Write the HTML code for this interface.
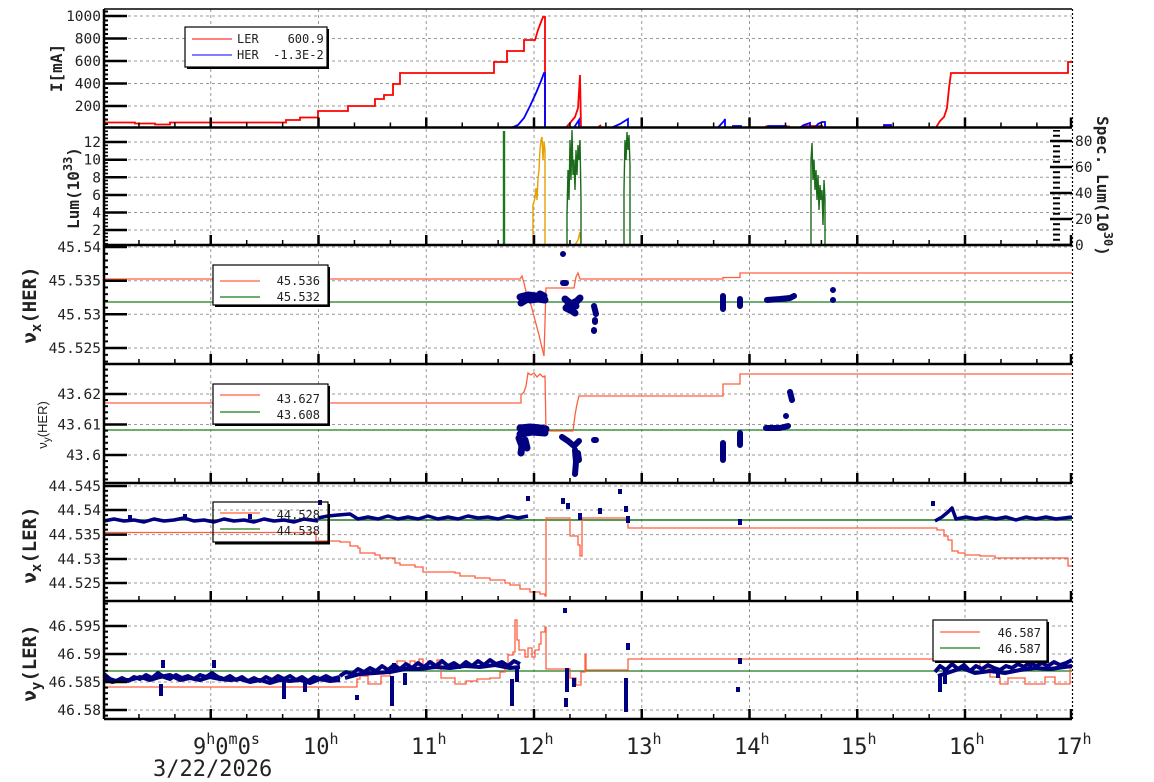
<!DOCTYPE html>
<html><head><meta charset="utf-8"><style>
html,body{margin:0;padding:0;background:#fff;}
svg{display:block;}
text{font-family:"DejaVu Sans Mono","Liberation Mono",monospace;fill:#222;}
.yl{font-size:14.5px;text-anchor:end;}
.lg{font-size:12px;}
.xl{font-size:22px;}
.nv{fill:none;stroke:#000080;stroke-linejoin:round;}
</style></head><body>
<svg width="1154" height="782" viewBox="0 0 1154 782" xmlns="http://www.w3.org/2000/svg">
<defs>
<pattern id="t1" patternUnits="userSpaceOnUse" x="0" y="15" width="20" height="4.5"><rect x="0" y="0" width="8" height="2" fill="#000"/></pattern>
<pattern id="t2" patternUnits="userSpaceOnUse" x="0" y="141" width="20" height="3.52"><rect x="0" y="0" width="8" height="1.6" fill="#000"/></pattern>
<pattern id="t3" patternUnits="userSpaceOnUse" x="0" y="246" width="20" height="6.74"><rect x="0" y="0" width="8" height="2" fill="#000"/></pattern>
<pattern id="t4" patternUnits="userSpaceOnUse" x="0" y="393" width="20" height="6.1"><rect x="0" y="0" width="8" height="2" fill="#000"/></pattern>
<pattern id="t5" patternUnits="userSpaceOnUse" x="0" y="485" width="20" height="4.85"><rect x="0" y="0" width="8" height="2" fill="#000"/></pattern>
<pattern id="t6" patternUnits="userSpaceOnUse" x="0" y="625" width="20" height="5.6"><rect x="0" y="0" width="8" height="2" fill="#000"/></pattern>
<pattern id="tr" patternUnits="userSpaceOnUse" x="0" y="244" width="20" height="5.2"><rect x="13" y="0" width="7" height="2" fill="#000"/></pattern>
<pattern id="bx" patternUnits="userSpaceOnUse" x="102.3" y="0" width="35.917" height="800"><rect x="0" y="0" width="1.5" height="800" fill="#000"/></pattern>
</defs>
<!-- grid -->
<path d="M210.75 9V719M318.5 9V719M426.25 9V719M534 9V719M641.75 9V719M749.5 9V719M857.25 9V719M965 9V719
M104 16H1072M104 38.5H1072M104 61H1072M104 83.5H1072M104 106H1072
M104 142H1072M104 159.7H1072M104 177.3H1072M104 195H1072M104 212.5H1072M104 230H1072
M104 247H1072M104 280.7H1072M104 314.3H1072M104 348H1072
M104 394H1072M104 424.5H1072M104 455H1072
M104 486H1072M104 510H1072M104 534.6H1072M104 559H1072M104 583H1072
M104 626H1072M104 654H1072M104 682H1072M104 710H1072" stroke="#999" stroke-width="1" stroke-dasharray="3,3" fill="none"/>

<!-- DATA panel1 -->
<path d="M104 122.5H135V123.5H155V124.5H170V122.5H286V120H300V117.5H318V111H348V106H375V99H384V95H393V84H400V73H494V62H507V51H524V40H535L538 30L541 22L543 17H545V127.5H566L570 123L575 117L578 108L580 75L581 127.5H936L940 121L944 117L947 108L949 88L951 73H1068V62H1072M598 127.5L601 125M765 126.5H790M803 126H823M884 126H891" stroke="#f00" stroke-width="1.8" fill="none"/>
<path d="M104 127.5H512L518 125L524 118L530 106L536 93L541 81L544 73H545V127.5H574L579 120V127.5H612L620 124L628 119V127.5H718L724 121L725 119V127.5H733V126H741V127.5H768V126H786V127.5H800L804 125L810 123V127.5H815L818 124L822 122H825V127.5H884V125H891V127.5H1072" stroke="#00f" stroke-width="1.8" fill="none"/>
<!-- panel2 -->
<path d="M504 245V131" stroke="#1a7a1a" stroke-width="2.4"/>
<path d="M533 245V205L535 198L536 188L537 200L538 178L539 170L540 150L541 140L542 137L543 160L544 142L545 150V245H575L578 240L580 232L581 245H628" stroke="#e8a000" stroke-width="1.4" fill="none"/>
<path d="M567 245V215L568 170L569 200L570 140L571 180L572 130L573 175L574 160L575 190L576 150L577 175L578 145L579 160L580 140L581 200V245M624 245V190L625 140L626 160L627 132L628 150L629 135L630 165V245M811 245V160L812 143L813 180L814 160L815 190L816 170L817 200L818 175L819 210L820 185L821 200L822 190L823 225L824 180L825 200V245" stroke="#1a6b1a" stroke-width="1.4" fill="none"/>
<!-- panel3 -->
<path d="M104 302H1072" stroke="#1a7a1a" stroke-width="1.3"/>
<path d="M104 279H520L522 276L524 283L527 296L531 305L535 320L539 335L542 348L544 356L546 288H574L576 277L578 273L580 279H723V277.5H740V273H1072" stroke="#ff5f3f" stroke-width="1.3" fill="none"/>
<g class="nv" stroke-linecap="round">
<path d="M520 297L528 295L536 296L544 298M521 303L526 300M530 300L538 299L545 300M540 294L544 296" stroke-width="7"/>
<path d="M565 299L571 304L577 301L580 298M566 308L572 311L575 313M568 305L576 306" stroke-width="7"/>
<path d="M563 254L563 254M563 283L566 283M594 306L596 314M595 320L595 322M594 330L594 331M723 296L723 309M740 299L740 306M767 300L780 299L790 298L794 296M833 290L833 290M833 300L833 300" stroke-width="6"/>
</g>
<!-- panel4 -->
<path d="M104 430H1072" stroke="#1a7a1a" stroke-width="1.3"/>
<path d="M104 403H521V395L524 392L526 386L528 373L531 375L534 373L537 377L540 374L543 377L545 376L546 431H573L575 415L577 404L579 396H723V384H740V374H1072" stroke="#ff5f3f" stroke-width="1.3" fill="none"/>
<g class="nv" stroke-linecap="round">
<path d="M520 428L530 427L540 428L546 429M520 434L532 432L545 433M519 438L522 446L521 453M525 440L527 448" stroke-width="7"/>
<path d="M562 437L568 441L574 446L579 441M575 450L576 462L575 474M578 453L579 460M594 440L596 440M723 443L723 460M740 433L740 445M766 428L780 428L788 426M790 392L792 400M786 416L786 416" stroke-width="6"/>
</g>
<!-- panel5 -->
<path d="M104 520H1072" stroke="#1a7a1a" stroke-width="1.4"/>
<path d="M104 532.5H316V541H340V542H350V546H358V548H360V553H375V555H380V558H395V563H400V565H415V567H423V572H455V573H460V576H475V578H490V580H505V583H510V585H520V589H530V592H540V594H545V596H546V518H570V536H578V545H580V556H582V518H628V528H937V530H944V536H948V540H952V551H958V553H965V555H980V556H995V558H1068V566H1072" stroke="#ff5f3f" stroke-width="1.3" fill="none"/>
<g class="nv" stroke-width="3.5">
<path d="M104 521L114 519L124 521L134 520L144 522L154 519L164 521L174 520L184 518L194 521L204 520L214 522L224 519L234 521L244 520L254 522L264 519L274 521L284 520L294 522L304 519L318 521"/>
<path d="M318 518L328 516L338 515L350 514L358 519L368 517L378 519L388 516L398 519L408 517L418 519L428 516L438 519L448 517L458 519L468 516L478 518L488 517L498 519L508 516L518 518L528 516"/>
<path d="M935 521L942 517L948 512L952 508L956 519L966 517L976 519L986 517L996 519L1006 517L1016 520L1026 517L1036 519L1046 517L1056 519L1072 517"/>
</g>
<g class="nv" stroke-width="4" stroke-linecap="square">
<path d="M130 517V518M185 516V517M250 516V517M320 502V503M528 498V499M563 500V502M568 505V507M580 515V518M600 510V512M620 491V492M626 508V510M628 518V521M740 521V523M933 503V504"/>
</g>
<!-- panel6 -->
<path d="M104 671H1072" stroke="#1a7a1a" stroke-width="1.3"/>
<path d="M104 687H357V679H360V676H368V684H381V676H390V672H393V668H397V661H405V664H410V661H415V668H419V659H423V668H428V661H432V668H437V660H441V678H455V684H466V681H477V679H490V678H500V672H505V664H508V655H513V652H515V620H517V640H519V650H525V657H528V648H532V657H535V650H539V644H541V632H545V627H546V669H570V678H576V685H581V672H585V654H586V670H628V659H937V644H942V652H950V640H953V656H960V662H980V668H990V677H1000V684H1008V678H1025V684H1045V677H1055V684H1070V668H1072" stroke="#ff5f3f" stroke-width="1.3" fill="none"/>
<g class="nv" stroke-width="4">
<path d="M104 674L110 679L116 681L122 678L128 681L134 677L140 679L146 675L152 678L158 673L164 677L170 679L176 675L182 678L188 676L194 679L200 675L206 677L212 673L218 677L224 679L230 676L236 680L242 677L248 681L254 678L260 681L266 677L272 680L278 676L284 679L290 676L296 680L302 677L308 681L314 677L320 679L326 676L332 679L340 677"/>
<path d="M104 678L112 682L120 680L130 680L140 677L150 680L160 677L170 675L180 680L190 678L200 680L210 677L220 679L230 680L240 679L250 682L260 680L270 683L280 680L290 681L300 680L310 683L320 679L330 681L340 680"/>
<path d="M340 676L346 672L352 674L358 669L364 672L370 668L376 671L382 666L388 670L394 665L400 669L406 664L412 668L418 663L424 667L430 662L436 666L442 661L448 666L454 663L460 667L466 662L472 666L478 661L484 665L490 660L496 664L502 662L508 666L514 661L520 664"/>
<path d="M345 678L360 674L375 673L390 672L405 669L420 669L435 667L450 668L465 666L480 667L495 665L510 668L520 667"/>
<path d="M935 672L940 666L946 670L952 664L958 669L964 665L970 671L976 666L982 669L988 665L994 668L1000 670L1006 666L1012 668L1018 664L1024 667L1030 662L1036 666L1042 663L1048 666L1054 662L1060 665L1066 663L1072 660"/>
<path d="M938 676L950 672L962 668L975 673L990 671L1005 673L1020 670L1035 668L1050 669L1072 666"/>
</g>
<g class="nv" stroke-width="4" stroke-linecap="square">
<path d="M161 686V694M163 662V666M214 662V666M284 684V697M305 685V690M357 697V698M392 678V704M394 665V670M405 675V683M512 681V704M517 670V680M565 610V611M567 670V690M574 680V685M566 700V705M628 645V648M626 680V710M738 689V690M740 660V662M940 676V690M945 670V682M998 672V676M1030 662V665"/>
</g>

<!-- axes -->
<path d="M104 9H1072" stroke="#000" stroke-width="1.5"/>
<path d="M1072.5 9V719" stroke="#000" stroke-width="1.2" stroke-dasharray="2,2"/>
<path d="M104 127.5H1072M104 245H1072M104 364H1072M104 483H1072M104 601H1072M104 719H1072M104 9V719" stroke="#000" stroke-width="2.5"/>
<rect x="104" y="10" width="8" height="116" fill="url(#t1)"/>
<rect x="104" y="129" width="8" height="115" fill="url(#t2)"/>
<rect x="104" y="246.5" width="8" height="116" fill="url(#t3)"/>
<rect x="104" y="365.5" width="8" height="116" fill="url(#t4)"/>
<rect x="104" y="484.5" width="8" height="115" fill="url(#t5)"/>
<rect x="104" y="602.5" width="8" height="115" fill="url(#t6)"/>
<rect x="1052" y="130" width="20" height="114" fill="url(#tr)"/>
<path d="M104 16H127M104 38.5H127M104 61H127M104 83.5H127M104 106H127M104 142H127M104 159.7H127M104 177.3H127M104 195H127M104 212.5H127M104 230H127M104 247H127M104 280.7H127M104 314.3H127M104 348H127M104 394H127M104 424.5H127M104 455H127M104 486H127M104 510H127M104 534.6H127M104 559H127M104 583H127M104 626H127M104 654H127M104 682H127M104 710H127M1072 245H1050M1072 219H1050M1072 193H1050M1072 167H1050M1072 141H1050" stroke="#000" stroke-width="2.5"/>
<rect x="106" y="122.5" width="966" height="5" fill="url(#bx)"/>
<rect x="106" y="240" width="966" height="5" fill="url(#bx)"/>
<rect x="106" y="359" width="966" height="5" fill="url(#bx)"/>
<rect x="106" y="478" width="966" height="5" fill="url(#bx)"/>
<rect x="106" y="596" width="966" height="5" fill="url(#bx)"/>
<rect x="106" y="714" width="966" height="5" fill="url(#bx)"/>
<path d="M210.75 127.5v-10M318.5 127.5v-10M426.25 127.5v-10M534 127.5v-10M641.75 127.5v-10M749.5 127.5v-10M857.25 127.5v-10M965 127.5v-10M1071 127.5v-10
M210.75 245v-10M318.5 245v-10M426.25 245v-10M534 245v-10M641.75 245v-10M749.5 245v-10M857.25 245v-10M965 245v-10M1071 245v-10
M210.75 364v-10M318.5 364v-10M426.25 364v-10M534 364v-10M641.75 364v-10M749.5 364v-10M857.25 364v-10M965 364v-10M1071 364v-10
M210.75 483v-10M318.5 483v-10M426.25 483v-10M534 483v-10M641.75 483v-10M749.5 483v-10M857.25 483v-10M965 483v-10M1071 483v-10
M210.75 601v-10M318.5 601v-10M426.25 601v-10M534 601v-10M641.75 601v-10M749.5 601v-10M857.25 601v-10M965 601v-10M1071 601v-10
M210.75 719v-10M318.5 719v-10M426.25 719v-10M534 719v-10M641.75 719v-10M749.5 719v-10M857.25 719v-10M965 719v-10M1071 719v-10" stroke="#000" stroke-width="2.5"/>

<!-- y labels -->
<g class="yl">
<text x="101" y="21">1000</text><text x="101" y="43.5">800</text><text x="101" y="66">600</text><text x="101" y="88.5">400</text><text x="101" y="111">200</text>
<text x="101" y="147">12</text><text x="101" y="164.7">10</text><text x="101" y="182.3">8</text><text x="101" y="200">6</text><text x="101" y="217.5">4</text><text x="101" y="235">2</text>
<text x="101" y="252">45.54</text><text x="101" y="285.7">45.535</text><text x="101" y="319.3">45.53</text><text x="101" y="353">45.525</text>
<text x="101" y="399">43.62</text><text x="101" y="429.5">43.61</text><text x="101" y="460">43.6</text>
<text x="101" y="491">44.545</text><text x="101" y="515">44.54</text><text x="101" y="539.6">44.535</text><text x="101" y="564">44.53</text><text x="101" y="588">44.525</text>
<text x="101" y="631">46.595</text><text x="101" y="659">46.59</text><text x="101" y="687">46.585</text><text x="101" y="715">46.58</text>
</g>
<g style="font-size:14.5px">
<text x="1075" y="146">80</text><text x="1075" y="172">60</text><text x="1075" y="198">40</text><text x="1075" y="224">20</text><text x="1075" y="250">0</text>
</g>
<!-- axis titles -->
<text transform="translate(62,68) rotate(-90)" text-anchor="middle" style="font-size:16px;font-weight:bold">I[mA]</text>
<text transform="translate(79,188) rotate(-90)" text-anchor="middle" style="font-size:16px;font-weight:bold">Lum(10<tspan dy="-7" style="font-size:12px">33</tspan><tspan dy="7">)</tspan></text>
<text transform="translate(1097,186) rotate(90)" text-anchor="middle" style="font-size:16px;font-weight:bold">Spec. Lum(10<tspan dy="-7" style="font-size:12px">30</tspan><tspan dy="7">)</tspan></text>
<text transform="translate(36,305) rotate(-90)" text-anchor="middle" style="font-size:19px;font-weight:bold">ν<tspan dy="5" style="font-size:14px">x</tspan><tspan dy="-5">(HER)</tspan></text>
<text transform="translate(47,425) rotate(-90)" text-anchor="middle" style="font-size:13px;font-family:'Liberation Sans',sans-serif">ν<tspan dy="3" style="font-size:10px">y</tspan><tspan dy="-3">(HER)</tspan></text>
<text transform="translate(36,545) rotate(-90)" text-anchor="middle" style="font-size:19px;font-weight:bold">ν<tspan dy="5" style="font-size:14px">x</tspan><tspan dy="-5">(LER)</tspan></text>
<text transform="translate(36,663) rotate(-90)" text-anchor="middle" style="font-size:19px;font-weight:bold">ν<tspan dy="5" style="font-size:14px">y</tspan><tspan dy="-5">(LER)</tspan></text>
<!-- x labels -->
<g class="xl">
<text x="193" y="754">9<tspan dy="-10" style="font-size:15px">h</tspan><tspan dy="10">0</tspan><tspan dy="-10" style="font-size:15px">m</tspan><tspan dy="10">0</tspan><tspan dy="-10" style="font-size:15px">s</tspan></text>
<text x="303" y="754">10<tspan dy="-10" style="font-size:15px">h</tspan></text>
<text x="411" y="754">11<tspan dy="-10" style="font-size:15px">h</tspan></text>
<text x="518" y="754">12<tspan dy="-10" style="font-size:15px">h</tspan></text>
<text x="626" y="754">13<tspan dy="-10" style="font-size:15px">h</tspan></text>
<text x="734" y="754">14<tspan dy="-10" style="font-size:15px">h</tspan></text>
<text x="841" y="754">15<tspan dy="-10" style="font-size:15px">h</tspan></text>
<text x="949" y="754">16<tspan dy="-10" style="font-size:15px">h</tspan></text>
<text x="1056" y="754">17<tspan dy="-10" style="font-size:15px">h</tspan></text>
<text x="153" y="776">3/22/2026</text>
</g>
<!-- legends -->
<rect x="187" y="29" width="142" height="40" fill="#000"/><rect x="185" y="27" width="142" height="40" fill="#fff" stroke="#000" stroke-width="1.2"/>
<path d="M192 39H232" stroke="#f00"/><path d="M192 55H232" stroke="#00f"/>
<text class="lg" x="237" y="43" xml:space="preserve">LER    600.9</text><text class="lg" x="237" y="59" xml:space="preserve">HER  -1.3E-2</text>

<rect x="215" y="267" width="115" height="40" fill="#000"/><rect x="213" y="265" width="115" height="40" fill="#fff" stroke="#000" stroke-width="1.2"/>
<path d="M220 281H260" stroke="#ff5f3f" stroke-width="1.2"/><path d="M220 297H260" stroke="#1a7a1a" stroke-width="1.2"/>
<rect x="215" y="386" width="115" height="40" fill="#000"/><rect x="213" y="384" width="115" height="40" fill="#fff" stroke="#000" stroke-width="1.2"/>
<path d="M220 395H260" stroke="#ff5f3f" stroke-width="1.2"/><path d="M220 412H260" stroke="#1a7a1a" stroke-width="1.2"/>
<rect x="213" y="502" width="115" height="40" fill="none" stroke="#000" stroke-width="1.2"/>
<path d="M329 504V543.5H215" stroke="#000" stroke-width="2" fill="none"/>
<path d="M220 513H260" stroke="#ff5f3f" stroke-width="1.2"/><path d="M220 529H260" stroke="#1a7a1a" stroke-width="1.2"/>
<rect x="935" y="622" width="114" height="41" fill="#000"/><rect x="933" y="620" width="114" height="41" fill="#fff" stroke="#000" stroke-width="1.2"/>
<path d="M940 632H980" stroke="#ff5f3f" stroke-width="1.2"/><path d="M940 648H980" stroke="#1a7a1a" stroke-width="1.2"/>
<g class="lg" text-anchor="end">
<text x="320" y="285">45.536</text><text x="320" y="301">45.532</text>
<text x="320" y="403">43.627</text><text x="320" y="419">43.608</text>
<text x="320" y="519">44.528</text><text x="320" y="535">44.538</text>
<text x="1041" y="637">46.587</text><text x="1041" y="653">46.587</text>
</g>
</svg>
</body></html>
